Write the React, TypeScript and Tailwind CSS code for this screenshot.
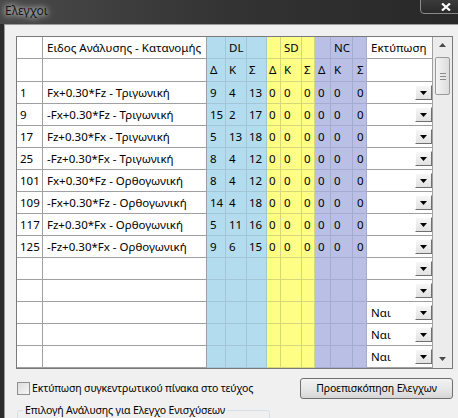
import React from "react";

type Col = { w: string; bg: string; b: string; pl: string };

const COLS: Col[] = [
  { w: "w-[26px]", bg: "bg-white", b: "border-[#a0a0a0]", pl: "pl-[3px]" },
  { w: "w-[164px]", bg: "bg-white", b: "border-[#a0a0a0]", pl: "pl-[4px]" },
  { w: "w-[19px]", bg: "bg-[#b4dcef]", b: "border-[#a2c6d8]", pl: "pl-[3px]" },
  { w: "w-[21px]", bg: "bg-[#b4dcef]", b: "border-[#a2c6d8]", pl: "pl-[3px]" },
  { w: "w-[20px]", bg: "bg-[#b4dcef]", b: "border-[#a2c6d8]", pl: "pl-[2px]" },
  { w: "w-[14px]", bg: "bg-[#fefe84]", b: "border-[#d6d67a]", pl: "pl-[2px]" },
  { w: "w-[21px]", bg: "bg-[#fefe84]", b: "border-[#d6d67a]", pl: "pl-[3px]" },
  { w: "w-[13px]", bg: "bg-[#fefe84]", b: "border-[#d6d67a]", pl: "pl-[2px]" },
  { w: "w-[16px]", bg: "bg-[#babfe6]", b: "border-[#a6abd2]", pl: "pl-[3px]" },
  { w: "w-[22px]", bg: "bg-[#babfe6]", b: "border-[#a6abd2]", pl: "pl-[3px]" },
  { w: "w-[14px]", bg: "bg-[#babfe6]", b: "border-[#a6abd2]", pl: "pl-[4px]" },
  { w: "w-[66px]", bg: "bg-white", b: "border-[#a0a0a0]", pl: "pl-[4px]" },
];

const DATA: string[][] = [
  ["1", "Fx+0.30*Fz - Τριγωνική", "9", "4", "13"],
  ["9", "-Fx+0.30*Fz - Τριγωνική", "15", "2", "17"],
  ["17", "Fz+0.30*Fx - Τριγωνική", "5", "13", "18"],
  ["25", "-Fz+0.30*Fx - Τριγωνική", "8", "4", "12"],
  ["101", "Fx+0.30*Fz - Ορθογωνική", "8", "4", "12"],
  ["109", "-Fx+0.30*Fz - Ορθογωνική", "14", "4", "18"],
  ["117", "Fz+0.30*Fx - Ορθογωνική", "5", "11", "16"],
  ["125", "-Fz+0.30*Fx - Ορθογωνική", "9", "6", "15"],
];

function DropBtn() {
  return (
    <div className="ml-auto mt-[3px] self-start w-[17px] h-[15px] bg-gradient-to-b from-[#f7f7f7] to-[#e2e2e2] border-t border-l border-t-white border-l-white border-b border-r border-b-[#6f6f6f] border-r-[#6f6f6f] flex items-center justify-center">
      <svg width="7" height="4" viewBox="0 0 7 4">
        <path d="M0 0h7L3.5 4z" fill="#000" />
      </svg>
    </div>
  );
}

function Row({ cells, h, print, drop }: { cells: string[]; h: string; print?: string; drop?: boolean }) {
  return (
    <div className={`flex ${h}`}>
      {COLS.map((c, i) =>
        i === 11 ? (
          <div key={i} className={`${c.w} ${c.bg} ${c.b} shrink-0 border-r border-b flex items-center ${c.pl}`}>
            <span>{print}</span>
            {drop && <DropBtn />}
          </div>
        ) : (
          <div key={i} className={`${c.w} ${c.bg} ${c.b} shrink-0 border-r border-b flex items-center ${c.pl} whitespace-nowrap overflow-hidden`}>
            {cells[i] ?? ""}
          </div>
        )
      )}
    </div>
  );
}

export default function App() {
  const rows = DATA.map((d) => [d[0], d[1], d[2], d[3], d[4], "0", "0", "0", "0", "0", "0"]);
  const empty = ["", "", "", "", ""].map((_, i) => ({ print: i >= 2 ? "Ναι" : "" }));

  return (
    <div className="w-[458px] h-[418px] overflow-hidden flex flex-col bg-[#2c2c2c] text-[11.5px] text-black font-['Noto_Sans',sans-serif] leading-none">
      {/* title bar */}
      <div className="h-[24px] shrink-0 flex items-start bg-gradient-to-r from-[#4a4a4a] via-[#333333] to-[#282828]">
        <div className="mt-[5px] ml-[5px] text-[12px] text-[#151515] [text-shadow:0_0_5px_#f0f0f0,0_0_9px_#c8c8c8]">
          Ελεγχοι
        </div>
        <div className="ml-auto mr-[-10px] w-[48px] h-[15px] mt-[-1px] border border-[#8a8a8a] rounded-b-[4px] bg-gradient-to-b from-[#3b3b3b] to-[#2a2a2a] flex items-center pl-[20px]">
          <svg width="10" height="8" viewBox="0 0 10 8">
            <path d="M1 0.5l8 7M9 0.5l-8 7" stroke="#fff" strokeWidth="2.2" />
          </svg>
        </div>
      </div>

      {/* window body */}
      <div className="flex-1 flex pl-[4px]">
        <div className="flex-1 bg-[#f0f0f0] border-t border-l border-[#9a9a9a] pl-[11px] pt-[11px] flex flex-col">
          {/* grid */}
          <div className="w-[437px] border border-[#7a7a7a] flex">
            <div className="w-[416px] shrink-0">
              <Row h="h-[22px]" cells={["", "Ειδος Ανάλυσης - Κατανομής", "", "DL", "", "", "SD", "", "", "NC", ""]} print="Εκτύπωση" />
              <Row h="h-[23px]" cells={["", "", "Δ", "Κ", "Σ", "Δ", "Κ", "Σ", "Δ", "Κ", "Σ"]} />
              {rows.map((r, i) => (
                <Row key={i} h="h-[22px]" cells={r} drop />
              ))}
              {empty.map((e, i) => (
                <Row key={"e" + i} h="h-[22px]" cells={[]} print={e.print} drop />
              ))}
            </div>
            {/* scrollbar */}
            <div className="flex-1 bg-[#ececec] flex flex-col items-center">
              <svg className="mt-[6px]" width="7" height="4" viewBox="0 0 7 4">
                <path d="M3.5 0L7 4H0z" fill="#4a4a4a" />
              </svg>
              <div className="mt-[10px] w-[15px] h-[38px] rounded-[2px] border border-[#9a9a9a] bg-gradient-to-r from-[#f4f4f4] to-[#dcdcdc] flex flex-col items-center justify-center gap-[2px]">
                <div className="w-[6px] h-[1px] bg-[#8a8a8a]" />
                <div className="w-[6px] h-[1px] bg-[#8a8a8a]" />
                <div className="w-[6px] h-[1px] bg-[#8a8a8a]" />
              </div>
              <svg className="mt-auto mb-[7px]" width="7" height="4" viewBox="0 0 7 4">
                <path d="M0 0h7L3.5 4z" fill="#4a4a4a" />
              </svg>
            </div>
          </div>

          {/* bottom controls */}
          <div className="mt-[9px] w-[437px] h-[21px] flex items-center text-[10.5px] tracking-[-0.15px]">
            <div className="ml-[1px] w-[13px] h-[13px] border border-[#8e8f8f] bg-gradient-to-br from-[#dcdcdc] to-[#f6f6f6]" />
            <span className="ml-[2px]">Εκτύπωση συγκεντρωτικού πίνακα στο τεύχος</span>
            <div className="ml-auto w-[153px] h-[21px] rounded-[3px] border border-[#707070] bg-gradient-to-b from-[#f2f2f2] via-[#e8e8e8] to-[#d6d6d6] flex items-center justify-center">
              Προεπισκόπηση Ελεγχων
            </div>
          </div>

          <fieldset className="mt-[4px] ml-[1px] w-[253px] h-[40px] border border-[#d5dfe5] rounded-[3px] px-[5px] text-[10.5px] tracking-[-0.15px]">
            <legend className="px-[2px] leading-[15px]">Επιλογή Ανάλυσης για Ελεγχο Ενισχύσεων</legend>
          </fieldset>
        </div>
      </div>
    </div>
  );
}
